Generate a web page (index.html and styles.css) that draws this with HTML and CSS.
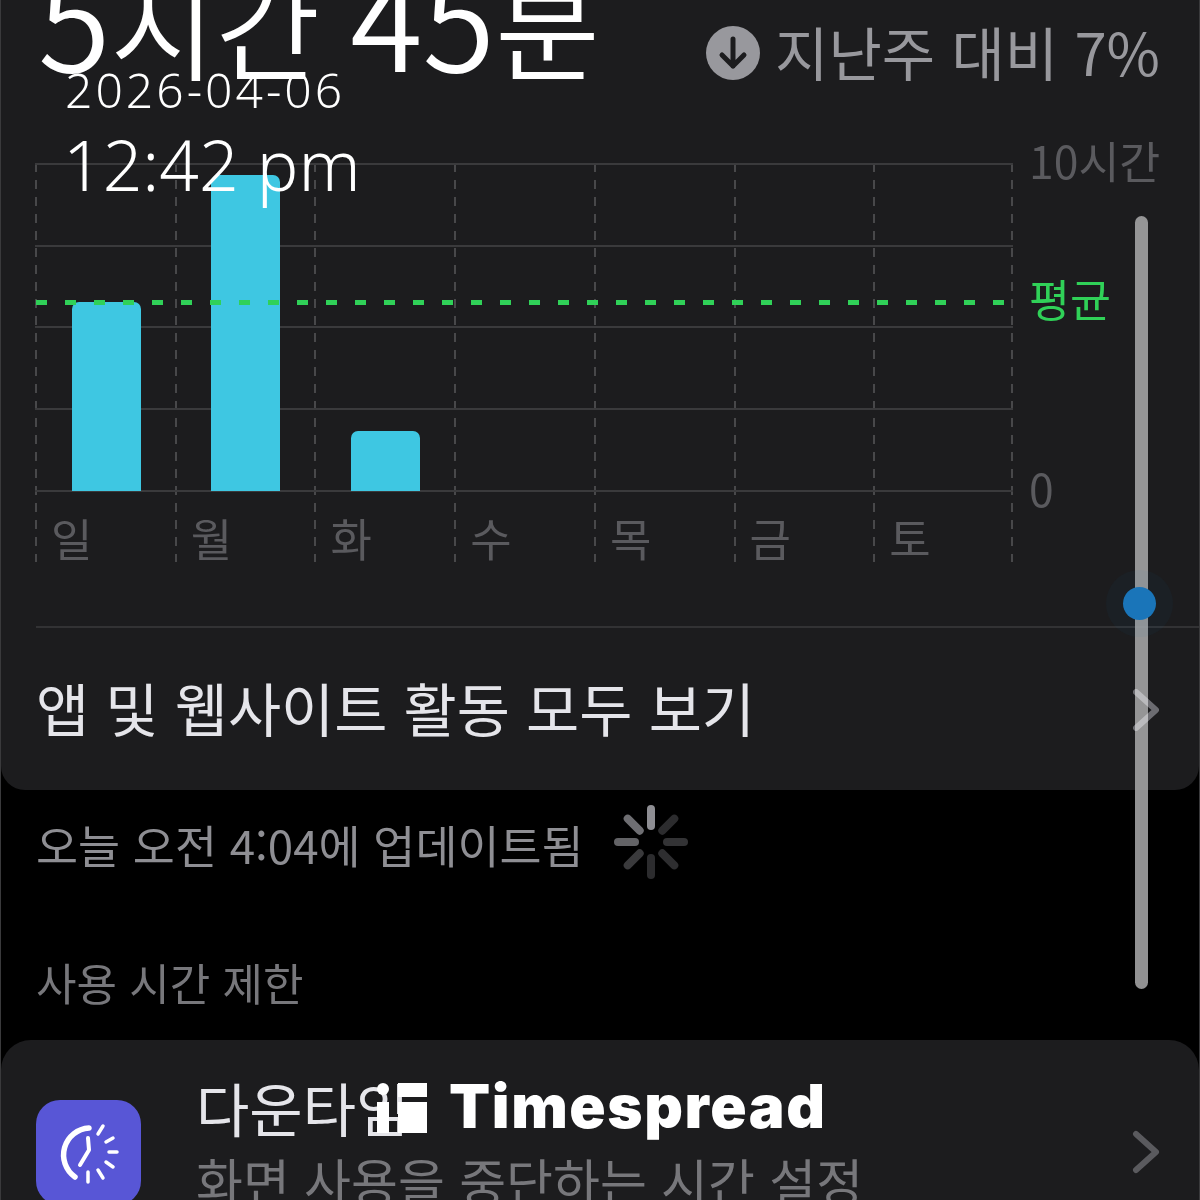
FILE: index.html
```html
<!DOCTYPE html>
<html lang="ko">
<head>
    <title>스크린 타임</title>
    <meta charset="utf-8">
    <link rel="stylesheet" href="styles.css">
</head>
<body>
    <div class="screen">
        <section class="card card-top">
            <div class="summary">
                <h1 class="total"><span class="num">5</span>시간 <span class="num">45</span>분</h1>
                <div class="compare">
                    <svg class="compare-icon" viewBox="0 0 56 56" width="56" height="56">
                        <circle cx="28" cy="28" r="27" fill="#98989d"/>
                        <path d="M28 14v27M17 30l11 11 11-11" fill="none" stroke="#1c1c1e" stroke-width="5" stroke-linecap="round" stroke-linejoin="round"/>
                    </svg>
                    <span class="compare-text">지난주 대비 7%</span>
                </div>
            </div>

            <div class="chart">
                <div class="days">
                    <div class="day"><div class="plot"><div class="bar bar-sun"></div></div><span class="day-name">일</span></div>
                    <div class="day"><div class="plot"><div class="bar bar-mon"></div></div><span class="day-name">월</span></div>
                    <div class="day"><div class="plot"><div class="bar bar-tue"></div></div><span class="day-name">화</span></div>
                    <div class="day"><div class="plot"></div><span class="day-name">수</span></div>
                    <div class="day"><div class="plot"></div><span class="day-name">목</span></div>
                    <div class="day"><div class="plot"></div><span class="day-name">금</span></div>
                    <div class="day"><div class="plot"></div><span class="day-name">토</span></div>
                </div>
                <div class="avg-line"></div>
                <span class="axis axis-top">10시간</span>
                <span class="axis axis-avg">평균</span>
                <span class="axis axis-zero">0</span>
            </div>

            <div class="row-link">
                <span>앱 및 웹사이트 활동 모두 보기</span>
                <svg class="chevron chevron-over" viewBox="0 0 28 44" width="28" height="44"><path d="M4 4l20 18L4 40" fill="none" stroke="#5a5a5e" stroke-width="6" stroke-linecap="round" stroke-linejoin="round"/></svg>
            </div>
        </section>

        <section class="gap">
            <div class="updated">
                <span class="updated-text">오늘 오전 4:04에 업데이트됨</span>
                <svg class="spinner" viewBox="0 0 76 76" width="76" height="76">
                    <g fill="none" stroke-width="8" stroke-linecap="round">
                        <path d="M38 5v17" stroke="#8e8e93"/>
                        <path d="M61.3 14.7L49.3 26.7" stroke="#2c2c2e"/>
                        <path d="M71 38H54" stroke="#333335"/>
                        <path d="M61.3 61.3L49.3 49.3" stroke="#2e2e30"/>
                        <path d="M38 71V54" stroke="#2c2c2e"/>
                        <path d="M14.7 61.3l12-12" stroke="#3a3a3c"/>
                        <path d="M5 38h17" stroke="#636366"/>
                        <path d="M14.7 14.7l12 12" stroke="#6e6e72"/>
                    </g>
                </svg>
            </div>
            <p class="section-title">사용 시간 제한</p>
        </section>

        <section class="card card-bottom">
            <div class="app-icon">
                <svg viewBox="0 0 105 105" width="105" height="105">
                    <path d="M53 28A27 27 0 0 0 39 77" fill="none" stroke="#fff" stroke-width="5.5" stroke-linecap="round"/>
                    <path d="M52 38l1 12-9 15" fill="none" stroke="#fff" stroke-width="4" stroke-linecap="round" stroke-linejoin="round"/>
                    <path d="M67 26l-5 8M77 38l-7 4M81 52h-8M77 67l-7-5M67 78l-5-8M52 82V72" fill="none" stroke="#fff" stroke-width="3.5" stroke-linecap="round"/>
                </svg>
            </div>
            <div class="app-text">
                <div class="app-title">다운타임</div>
                <div class="app-sub">화면 사용을 중단하는 시간 설정</div>
            </div>
            <svg class="chevron" viewBox="0 0 28 44" width="28" height="44"><path d="M4 4l20 18L4 40" fill="none" stroke="#5a5a5e" stroke-width="6" stroke-linecap="round" stroke-linejoin="round"/></svg>
        </section>

        <!-- player overlay -->
        <div class="stamp">
            <div class="stamp-date">2026-04-06</div>
            <div class="stamp-time">12:42 pm</div>
        </div>
        <div class="scroll-track"></div>
        <div class="scroll-thumb"></div>
        <div class="brand">
            <svg viewBox="0 0 54 52" width="54" height="52">
                <circle cx="8" cy="7" r="6" fill="#fff"/>
                <rect x="2" y="20" width="12" height="31" fill="#fff"/>
                <rect x="23" y="1" width="29" height="14" fill="#fff"/>
                <rect x="23" y="20" width="29" height="31" fill="#fff"/>
            </svg>
            <span class="brand-name">Timespread</span>
        </div>
    </div>
</body>
</html>
```

FILE: styles.css
```css
* {
    box-sizing: border-box;
}

html, body {
    margin: 0;
    padding: 0;
}

body {
    background: #000;
    font-family: "Noto Sans CJK KR", "Noto Sans", sans-serif;
}

.screen {
    position: relative;
    width: 1200px;
    height: 1200px;
    overflow: hidden;
    display: flex;
    flex-direction: column;
    background: #000;
    border-left: 1px solid #3a3a3c;
    border-right: 1px solid #3a3a3c;
}

.card {
    background: #1c1c1e;
}

.card-top {
    height: 790px;
    border-radius: 0 0 24px 24px;
    flex-shrink: 0;
}

.summary {
    height: 163px;
    padding: 0 39px 0 37px;
    display: flex;
    justify-content: space-between;
    align-items: flex-start;
}

.total {
    margin: -60px 0 0;
    font-size: 114px;
    font-weight: 350;
    line-height: 150px;
    color: #fff;
    white-space: nowrap;
    word-spacing: -2px;
}

.num {
    font-size: 132px;
}

.compare {
    display: flex;
    align-items: center;
    gap: 14px;
    margin-top: 25px;
    font-size: 58px;
    line-height: 56px;
    color: #98989d;
    white-space: nowrap;
}

.compare-text {
    margin-top: -4px;
}

.chart {
    position: relative;
    height: 463px;
    padding-left: 34px;
}

.days {
    display: flex;
    width: 978px;
    background: repeating-linear-gradient(to bottom, #48484a 0, #48484a 9px, transparent 9px, transparent 17px) right top / 2px 399px no-repeat;
}

.day {
    flex: 1;
    height: 399px;
    background: repeating-linear-gradient(to bottom, #48484a 0, #48484a 9px, transparent 9px, transparent 17px) left top / 2px 399px no-repeat;
}

/* grid lines run behind the bars, one every quarter of the plot */
.plot {
    height: 329px;
    padding: 0 0 1px 36.5px;
    display: flex;
    align-items: flex-end;
    background: repeating-linear-gradient(to bottom, #3a3a3c 0, #3a3a3c 2px, transparent 2px, transparent 81.75px);
}

.bar {
    width: 69px;
    background: #3ec7e2;
    border-radius: 7px 7px 0 0;
}

.bar-sun { height: 189px; }
.bar-mon { height: 316px; }
.bar-tue { height: 60px; }

.day-name {
    display: block;
    padding: 11px 0 0 16px;
    font-size: 45px;
    line-height: 70px;
    color: #5a5a5e;
}

.avg-line {
    position: absolute;
    left: 35px;
    top: 137px;
    width: 970px;
    height: 5px;
    background: repeating-linear-gradient(to right, #30d158 0, #30d158 11px, transparent 11px, transparent 29px);
}

.axis {
    position: absolute;
    left: 1028px;
    font-size: 44.5px;
    line-height: 50px;
    color: #5a5a5e;
    white-space: nowrap;
}

.axis-top { top: -28px; }
.axis-avg { top: 110px; color: #30d158; }
.axis-zero { top: 300px; }

.row-link {
    height: 164px;
    margin-left: 35px;
    padding: 0 39px 4px 0;
    border-top: 2px solid #323234;
    display: flex;
    align-items: center;
    justify-content: space-between;
    font-size: 57.8px;
    color: #e5e5ea;
}

.chevron {
    flex-shrink: 0;
}

/* sits above the scroll bar and brightens where it crosses it */
.chevron-over {
    position: relative;
    z-index: 1;
    margin-top: 6px;
    mix-blend-mode: screen;
}

.gap {
    height: 250px;
    padding-left: 35px;
    flex-shrink: 0;
    color: #8e8e93;
    font-size: 44px;
}

.updated {
    display: flex;
    align-items: center;
    gap: 29px;
    height: 104px;
}

.updated-text {
    margin-top: 4px;
    font-size: 45.7px;
}

.section-title {
    margin: 0;
    padding-top: 58px;
    line-height: 60px;
    color: #77777b;
}

.card-bottom {
    flex: 1;
    border-radius: 30px 30px 0 0;
    padding: 0 39px 0 35px;
    display: flex;
    align-items: flex-start;
}

.app-icon {
    width: 105px;
    height: 105px;
    margin-top: 60px;
    margin-right: 55px;
    flex-shrink: 0;
    background: #5856d6;
    border-radius: 24px;
}

.app-text {
    flex: 1;
    padding-top: 29px;
}

.app-title {
    font-size: 58px;
    line-height: 76px;
    color: #e5e5ea;
}

.app-sub {
    font-size: 51px;
    line-height: 70px;
    color: #77777b;
    white-space: nowrap;
}

.card-bottom .chevron {
    margin-top: 90px;
}

.stamp {
    position: absolute;
    left: 64px;
    top: 60px;
    color: #fff;
    font-family: "Noto Sans", sans-serif;
    font-weight: 300;
}

.stamp-date {
    font-size: 48px;
    line-height: 60px;
    letter-spacing: 3px;
}

.stamp-time {
    margin: 4px 0 0 -2px;
    font-size: 69.5px;
    line-height: 80px;
}

.scroll-track {
    position: absolute;
    left: 1134px;
    top: 216px;
    width: 13px;
    height: 773px;
    border-radius: 7px;
    background: rgba(170, 170, 172, 0.85);
}

.scroll-thumb {
    position: absolute;
    left: 1122px;
    top: 587px;
    width: 33px;
    height: 33px;
    border-radius: 50%;
    background: #1a75b9;
    box-shadow: 0 0 0 17px rgba(26, 117, 185, 0.05);
}

.brand {
    position: absolute;
    left: 374px;
    top: 1082px;
    display: flex;
    align-items: center;
    gap: 20px;
    color: #fff;
}

.brand-name {
    margin-top: -4px;
    font-family: Inter, sans-serif;
    font-weight: 900;
    font-size: 60px;
    line-height: 50px;
    letter-spacing: 1.6px;
}
```
